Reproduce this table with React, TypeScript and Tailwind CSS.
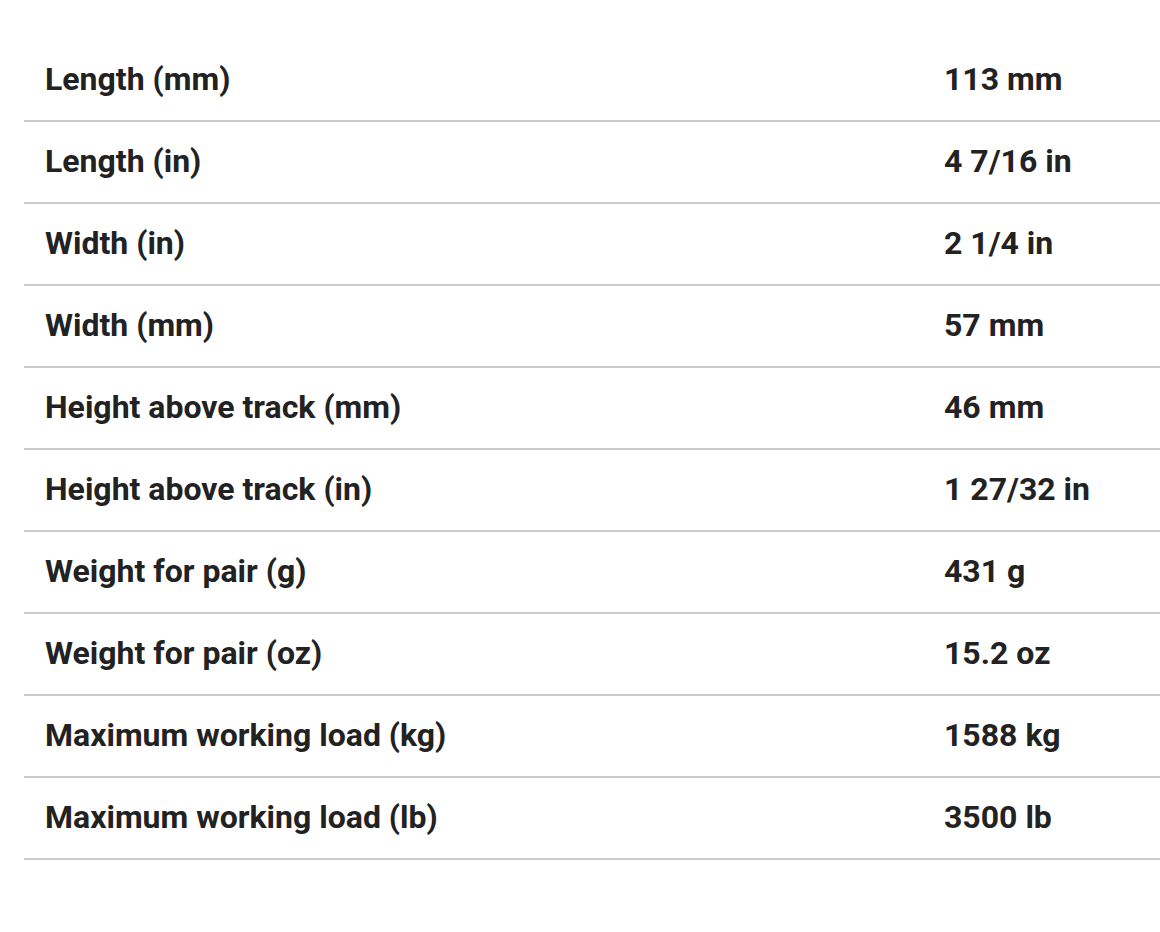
const specs: [string, string][] = [
  ["Length (mm)", "113 mm"],
  ["Length (in)", "4 7/16 in"],
  ["Width (in)", "2 1/4 in"],
  ["Width (mm)", "57 mm"],
  ["Height above track (mm)", "46 mm"],
  ["Height above track (in)", "1 27/32 in"],
  ["Weight for pair (g)", "431 g"],
  ["Weight for pair (oz)", "15.2 oz"],
  ["Maximum working load (kg)", "1588 kg"],
  ["Maximum working load (lb)", "3500 lb"],
];

export default function App() {
  return (
    <div className="min-h-screen bg-white pl-6 pt-[39px] font-['Roboto',sans-serif] text-[#222]">
      <table className="w-full border-collapse">
        <tbody>
          {specs.map(([label, value]) => (
            <tr key={label} className="h-[82px] border-b-2 border-[#cccccc]">
              <td className="pl-[21px] pb-[2px] text-[32px] font-bold">{label}</td>
              <td className="w-[216px] pl-0 pb-[2px] text-[32px] font-bold">{value}</td>
            </tr>
          ))}
        </tbody>
      </table>
    </div>
  );
}
